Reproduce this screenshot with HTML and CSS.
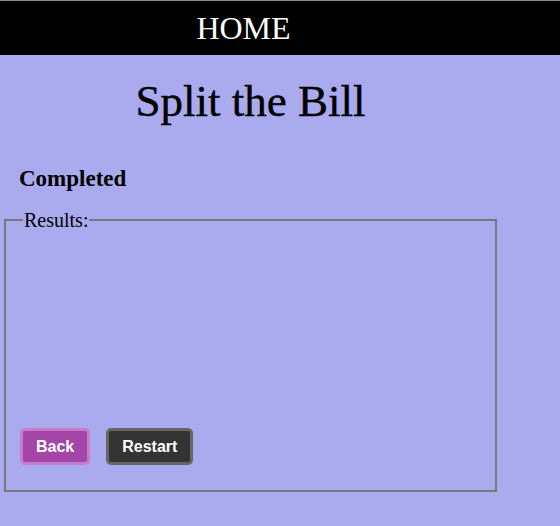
FILE: index.html
```html
<!DOCTYPE html>
<html>
<head>
<meta charset="utf-8">
<link rel="stylesheet" href="styles.css">
</head>
<body>
<header class="topbar">
  <div class="topbar-inner"><a class="home-link" href="#">HOME</a></div>
</header>
<main class="page">
  <h1 class="title">Split the Bill</h1>
  <h2 class="status">Completed</h2>
  <fieldset class="results">
    <legend class="results-legend">Results:</legend>
    <div class="results-body"></div>
    <div class="actions">
      <button class="btn btn-back">Back</button>
      <button class="btn btn-restart">Restart</button>
    </div>
  </fieldset>
</main>
</body>
</html>
```
FILE: styles.css
```css
html, body {
  margin: 0;
  padding: 0;
  background: #aaaaee;
  font-family: "Liberation Serif", serif;
}
.topbar {
  background: #000;
  border-top: 1px solid #8a8a8a;
  height: 54px;
}
.topbar-inner {
  width: 487px;
  height: 54px;
  display: flex;
  align-items: center;
  justify-content: center;
}
.home-link {
  color: #fff;
  text-decoration: none;
  font-size: 32px;
}
.page {
  width: 497px;
  padding-left: 4px;
  box-sizing: border-box;
}
.title {
  margin: 20px 0 0 0;
  text-align: center;
  font-size: 45px;
  font-weight: normal;
  line-height: 52px;
  color: #000;
  -webkit-text-stroke: 0.4px #000;
}
.status {
  margin: 39px 0 0 15px;
  font-size: 23px;
  font-weight: bold;
  line-height: 26px;
}
.results {
  margin: 18px 0 0 0;
  padding: 0 14px 25px 14px;
  border: 2px solid #777;
  height: 282px;
  box-sizing: border-box;
  display: flex;
  flex-direction: column;
}
.results-legend {
  padding: 0 1px;
  margin-left: 3px;
  font-size: 20px;
  line-height: 20px;
}
.results-body {
  flex: 1;
}
.actions {
  display: flex;
  gap: 16px;
}
.btn {
  font-family: "Liberation Sans", Arial, sans-serif;
  font-weight: bold;
  font-size: 16px;
  color: #fff;
  border-radius: 5px;
  height: 37px;
  padding: 0 13px;
  cursor: pointer;
}
.btn-back {
  background: #a445a8;
  border: 3px solid #c47ccb;
}
.btn-restart {
  background: #333;
  border: 3px solid #666;
}
```
